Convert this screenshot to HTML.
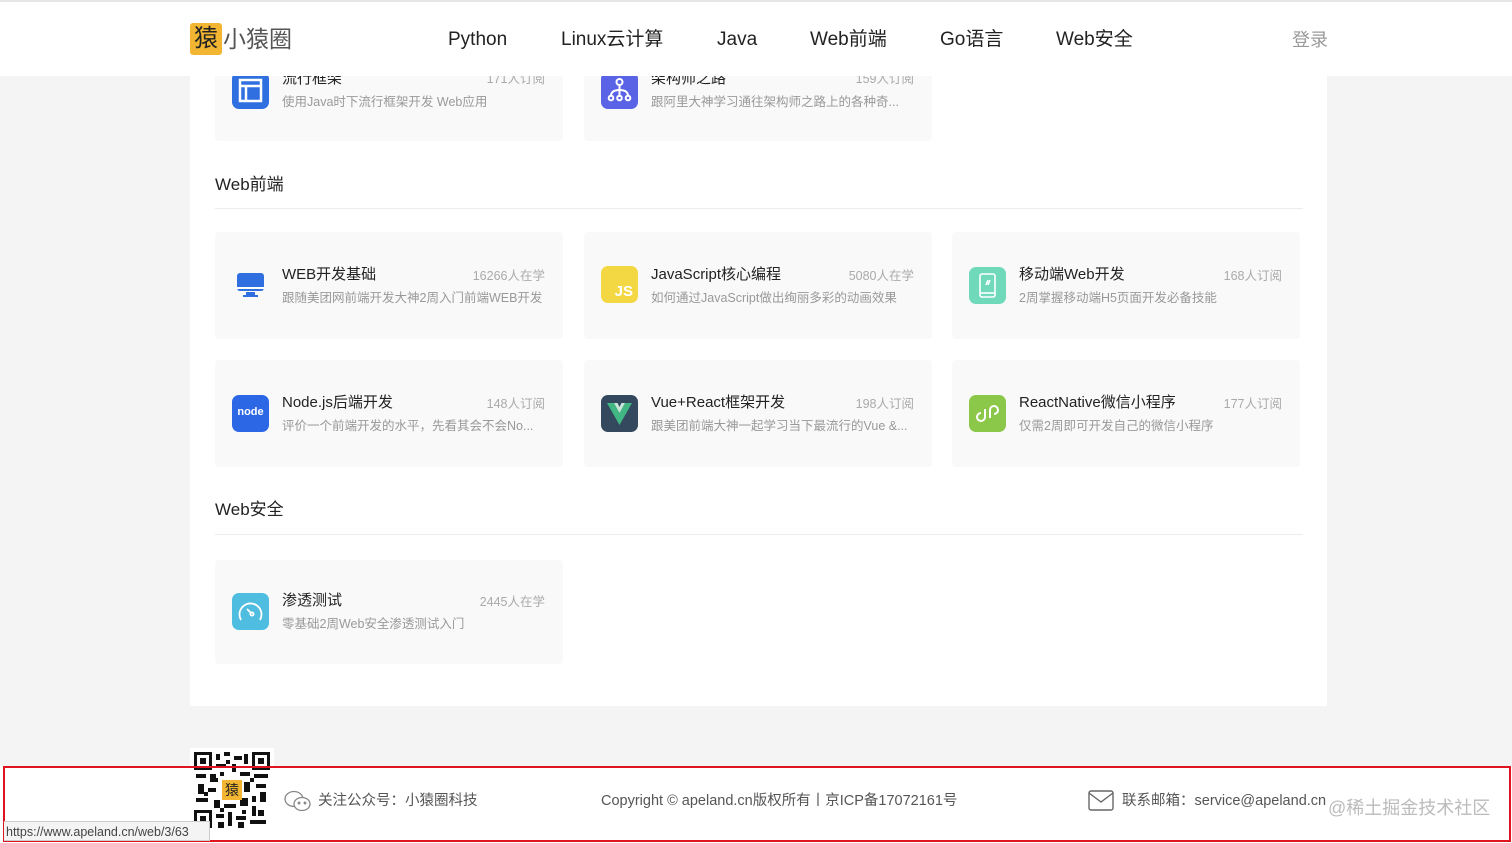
<!DOCTYPE html>
<html><head><meta charset="utf-8">
<style>
*{margin:0;padding:0;box-sizing:border-box}
body{width:1512px;height:843px;overflow:hidden;background:#f4f4f4;font-family:"Liberation Sans","Noto Sans CJK SC",sans-serif;position:relative}
.abs{position:absolute}
.header{left:0;top:0;width:1512px;height:76px;background:#fff;border-top:2px solid #e6e6e6;z-index:5}
.nav{top:26px;font-size:19px;line-height:24px;color:#222;white-space:nowrap}
.main{left:190px;top:0;width:1137px;height:706px;background:#fff}
.card{position:absolute;width:348px;background:#f9f9f9;border-radius:4px}
.card .ic{position:absolute;left:17px;width:37px;height:37px;border-radius:7px}
.card .t{position:absolute;left:67px;font-size:15px;line-height:18px;color:#222;white-space:nowrap}
.card .n{position:absolute;right:18px;font-size:12.5px;line-height:16px;color:#aaa}
.card .d{position:absolute;left:67px;font-size:12.5px;line-height:16px;color:#999;white-space:nowrap}
.sec{font-size:17px;line-height:22px;color:#222;left:215px}
.line{left:215px;width:1088px;height:1px;background:#ececec}
.ft{font-size:14.5px;line-height:18px;color:#555;white-space:nowrap}
</style></head><body>
<div class="abs main"></div>

<div class="card" style="left:215px;top:40px;height:101px">
 <div class="ic" style="top:32px;background:#2f6fe0"><svg width="37" height="37"><rect x="8" y="8" width="21" height="21" fill="none" stroke="#fff" stroke-width="2.5"/><line x1="8" y1="14" x2="29" y2="14" stroke="#fff" stroke-width="2.5"/><line x1="14" y1="14" x2="14" y2="29" stroke="#fff" stroke-width="2.5"/></svg></div>
 <div class="t" style="top:30px">流行框架</div><div class="n" style="top:31px">171人订阅</div>
 <div class="d" style="top:54px">使用Java时下流行框架开发 Web应用</div>
</div>
<div class="card" style="left:584px;top:40px;height:101px">
 <div class="ic" style="top:32px;background:#5a63e6"><svg width="37" height="37" fill="none" stroke="#fff" stroke-width="2"><circle cx="18.5" cy="10" r="3"/><line x1="18.5" y1="13" x2="18.5" y2="25"/><path d="M10 24 Q10 18 18.5 18 Q27 18 27 24"/><circle cx="10" cy="26" r="2.3"/><circle cx="18.5" cy="26" r="2.3"/><circle cx="27" cy="26" r="2.3"/></svg></div>
 <div class="t" style="top:30px">架构师之路</div><div class="n" style="top:31px">159人订阅</div>
 <div class="d" style="top:54px">跟阿里大神学习通往架构师之路上的各种奇...</div>
</div>

<div class="abs sec" style="top:174px">Web前端</div>
<div class="abs line" style="top:208px"></div>

<div class="card" style="left:215px;top:232px;height:107px">
 <div class="ic" style="top:35px"><svg width="37" height="37"><rect x="5" y="6" width="27" height="18" rx="3" fill="#2f6fe0"/><rect x="5" y="20" width="27" height="2" fill="#fff"/><rect x="14" y="25" width="9" height="3" fill="#2f6fe0"/><rect x="11" y="28" width="15" height="2" fill="#2f6fe0"/></svg></div>
 <div class="t" style="top:34px">WEB开发基础</div><div class="n" style="top:36px">16266人在学</div>
 <div class="d" style="top:58px">跟随美团网前端开发大神2周入门前端WEB开发</div>
</div>
<div class="card" style="left:584px;top:232px;height:107px">
 <div class="ic" style="top:34px;background:#f3d843"><div style="position:absolute;right:5px;bottom:2px;color:#fff;font-weight:bold;font-size:15px;line-height:18px">JS</div></div>
 <div class="t" style="top:34px">JavaScript核心编程</div><div class="n" style="top:36px">5080人在学</div>
 <div class="d" style="top:58px">如何通过JavaScript做出绚丽多彩的动画效果</div>
</div>
<div class="card" style="left:952px;top:232px;height:107px">
 <div class="ic" style="top:35px;background:#6fd9b9"><svg width="37" height="37" fill="none" stroke="#fff" stroke-width="1.6"><rect x="11" y="7" width="15" height="23" rx="2"/><line x1="11" y1="26" x2="26" y2="26"/><line x1="17" y1="18" x2="19" y2="13"/><line x1="19" y1="18" x2="21" y2="13"/></svg></div>
 <div class="t" style="top:34px">移动端Web开发</div><div class="n" style="top:36px">168人订阅</div>
 <div class="d" style="top:58px">2周掌握移动端H5页面开发必备技能</div>
</div>

<div class="card" style="left:215px;top:360px;height:107px">
 <div class="ic" style="top:35px;background:#2c68e6"><div style="position:absolute;left:0;width:37px;top:11px;text-align:center;color:#fff;font-weight:bold;font-size:11px;line-height:13px">node</div></div>
 <div class="t" style="top:34px">Node.js后端开发</div><div class="n" style="top:36px">148人订阅</div>
 <div class="d" style="top:58px">评价一个前端开发的水平，先看其会不会No...</div>
</div>
<div class="card" style="left:584px;top:360px;height:107px">
 <div class="ic" style="top:35px;background:#34495e"><svg width="37" height="37"><path d="M6 8 L13 8 L18.5 18 L24 8 L31 8 L18.5 30 Z" fill="#41b883"/><path d="M13 8 L18.5 18 L24 8 L20.5 8 L18.5 12 L16.5 8Z" fill="#c9e6d8"/></svg></div>
 <div class="t" style="top:34px">Vue+React框架开发</div><div class="n" style="top:36px">198人订阅</div>
 <div class="d" style="top:58px">跟美团前端大神一起学习当下最流行的Vue &amp;...</div>
</div>
<div class="card" style="left:952px;top:360px;height:107px">
 <div class="ic" style="top:35px;background:#8bc84a"><svg width="37" height="37" fill="none" stroke="#fff" stroke-width="2"><path d="M16 14 V22 A4 4 0 1 1 12 18 M21 23 V15 A4 4 0 1 1 25 19"/></svg></div>
 <div class="t" style="top:34px">ReactNative微信小程序</div><div class="n" style="top:36px">177人订阅</div>
 <div class="d" style="top:58px">仅需2周即可开发自己的微信小程序</div>
</div>

<div class="abs sec" style="top:499px">Web安全</div>
<div class="abs line" style="top:534px"></div>

<div class="card" style="left:215px;top:560px;height:104px">
 <div class="ic" style="top:33px;background:#4fbde0"><svg width="37" height="37" fill="none" stroke="#fff" stroke-width="1.8"><path d="M9 27 A11 11 0 1 1 28 27"/><line x1="15" y1="16" x2="19" y2="20"/><circle cx="20" cy="21" r="1.6"/></svg></div>
 <div class="t" style="top:32px">渗透测试</div><div class="n" style="top:34px">2445人在学</div>
 <div class="d" style="top:56px">零基础2周Web安全渗透测试入门</div>
</div>

<div class="abs header">
 <div class="abs" style="left:190px;top:21px;width:32px;height:32px;background:#f2b632;border-radius:3px;font-size:24px;line-height:32px;text-align:center;color:#222">猿</div>
 <div class="abs" style="left:223px;top:22px;font-size:23px;line-height:30px;color:#555">小猿圈</div>
 <div class="abs nav" style="left:448px">Python</div>
 <div class="abs nav" style="left:561px">Linux云计算</div>
 <div class="abs nav" style="left:717px">Java</div>
 <div class="abs nav" style="left:810px">Web前端</div>
 <div class="abs nav" style="left:940px">Go语言</div>
 <div class="abs nav" style="left:1056px">Web安全</div>
 <div class="abs" style="left:1292px;top:26px;font-size:18px;line-height:24px;color:#999">登录</div>
</div>

<div class="abs" style="left:0;top:766px;width:1512px;height:77px;background:#fff"></div>
<div class="abs" style="left:190px;top:748px;width:84px;height:82px;background:#fff"></div>
<svg class="abs" style="left:194px;top:752px" width="76" height="76">
 <rect width="76" height="76" fill="#fff"/>
 <g fill="#111">
 <rect x="0" y="0" width="18" height="18"/><rect x="58" y="0" width="18" height="18"/><rect x="0" y="58" width="18" height="18"/>
 </g>
 <g fill="#fff"><rect x="3" y="3" width="12" height="12"/><rect x="61" y="3" width="12" height="12"/><rect x="3" y="61" width="12" height="12"/></g>
 <g fill="#111"><rect x="6" y="6" width="6" height="6"/><rect x="64" y="6" width="6" height="6"/><rect x="6" y="64" width="6" height="6"/>
 <rect x="22" y="2" width="4" height="6"/><rect x="30" y="0" width="6" height="4"/><rect x="40" y="4" width="8" height="4"/><rect x="50" y="2" width="4" height="10"/>
 <rect x="22" y="12" width="10" height="4"/><rect x="38" y="12" width="4" height="8"/><rect x="2" y="22" width="10" height="4"/><rect x="16" y="22" width="6" height="8"/>
 <rect x="46" y="20" width="10" height="4"/><rect x="60" y="22" width="14" height="4"/><rect x="4" y="32" width="6" height="10"/><rect x="14" y="36" width="8" height="4"/>
 <rect x="50" y="30" width="6" height="10"/><rect x="62" y="32" width="10" height="4"/><rect x="66" y="40" width="6" height="10"/><rect x="2" y="46" width="12" height="4"/>
 <rect x="20" y="48" width="6" height="8"/><rect x="30" y="52" width="12" height="4"/><rect x="46" y="46" width="8" height="8"/><rect x="58" y="54" width="4" height="10"/>
 <rect x="22" y="62" width="8" height="4"/><rect x="34" y="60" width="4" height="14"/><rect x="42" y="64" width="10" height="4"/><rect x="56" y="68" width="16" height="4"/>
 <rect x="24" y="70" width="6" height="6"/><rect x="44" y="70" width="6" height="6"/><rect x="20" y="26" width="4" height="4"/><rect x="56" y="26" width="4" height="4"/>
 <rect x="26" y="20" width="4" height="4"/><rect x="32" y="8" width="4" height="4"/><rect x="10" y="40" width="4" height="4"/><rect x="58" y="44" width="4" height="6"/><rect x="64" y="58" width="6" height="6"/><rect x="48" y="58" width="4" height="4"/><rect x="26" y="56" width="4" height="4"/></g>
 <rect x="28" y="28" width="20" height="20" fill="#f2b632"/>
 <text x="38" y="43" font-size="14" text-anchor="middle" fill="#222" font-family="Noto Sans CJK SC">猿</text>
</svg>
<svg class="abs" style="left:284px;top:790px" width="28" height="22" fill="none" stroke="#888" stroke-width="1.3"><ellipse cx="10" cy="9" rx="9" ry="7.5"/><ellipse cx="18" cy="14" rx="8" ry="6.5" fill="#fff"/><circle cx="15" cy="13" r=".8" fill="#888"/><circle cx="21" cy="13" r=".8" fill="#888"/></svg>
<div class="abs ft" style="left:318px;top:792px">关注公众号：小猿圈科技</div>
<div class="abs ft" style="left:601px;top:792px">Copyright © apeland.cn版权所有丨京ICP备17072161号</div>
<svg class="abs" style="left:1088px;top:790px" width="26" height="21" fill="none" stroke="#666" stroke-width="1.4"><rect x="1" y="1" width="24" height="19" rx="2"/><path d="M1 3 L13 12 L25 3"/></svg>
<div class="abs ft" style="left:1122px;top:792px">联系邮箱：service@apeland.cn</div>
<div class="abs" style="left:1328px;top:797px;font-size:18px;line-height:22px;color:#bbb">@稀土掘金技术社区</div>
<div class="abs" style="left:3px;top:766px;width:1508px;height:76px;border:2.5px solid #e0141e"></div>
<div class="abs" style="left:4px;top:821px;width:206px;height:20px;background:#f4f4f4;border:1px solid #ccc;border-left:none;font-size:12.5px;line-height:16px;color:#444;padding:2px 0 0 2px;white-space:nowrap;overflow:hidden">https://www.apeland.cn/web/3/63</div>
</body></html>
